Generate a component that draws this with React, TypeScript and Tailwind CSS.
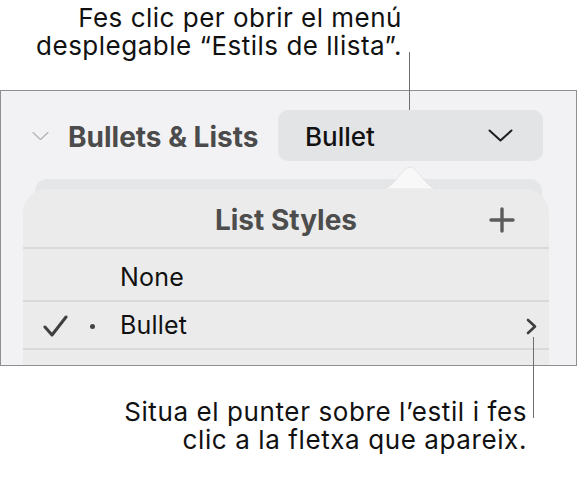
function ChevronDown({ className, stroke }: { className: string; stroke: string }) {
  return (
    <svg className={className} viewBox="0 0 25 13" fill="none">
      <path d="M1.5 1.5 L12.5 11.5 L23.5 1.5" stroke={stroke} strokeWidth="2" strokeLinecap="round" strokeLinejoin="round" />
    </svg>
  );
}

export default function App() {
  return (
    <div className="relative w-[577px] h-[497px] overflow-hidden bg-white font-[Inter,sans-serif] text-[#111]">
      {/* Top callout */}
      <div className="pt-[4px] text-right pr-[175px] text-[26px] leading-[28px] tracking-[0.5px]">
        <p>Fes clic per obrir el menú</p>
        <p>desplegable “Estils de llista”.</p>
      </div>

      {/* Inspector panel */}
      <div className="relative mt-[30px] h-[276px] border border-[#8f8f8f] bg-[#f2f2f4] overflow-hidden">
        <div className="mt-[19px] flex items-center h-[51px]">
          <ChevronDown className="ml-[31px] w-[17px] h-[10px]" stroke="#b4b4b6" />
          <span className="ml-[19px] pt-[2px] text-[28px] font-bold text-[#4b4b4b]">Bullets &amp; Lists</span>
          <button className="ml-auto mr-[33px] w-[265px] h-[51px] rounded-[10px] bg-[#e3e4e6] flex items-center pl-[27px] pr-[30px]">
            <span className="pt-[2px] text-[26px] font-medium text-[#111]">Bullet</span>
            <ChevronDown className="ml-auto w-[25px] h-[13px]" stroke="#1f1f1f" />
          </button>
        </div>

        {/* card behind the popover */}
        <div className="mt-[18px] mx-[34px] h-[30px] rounded-[12px] bg-[#e5e6e8]" />

        {/* popover */}
        <div className="-mt-[20px] ml-[22px] mr-[27px] rounded-t-[24px] bg-[#ebebeb]">
          <div className="grid grid-cols-[1fr_auto_1fr] items-center h-[58px] pt-[4px]">
            <span />
            <span className="text-[28px] font-bold text-[#4d4d4d]">List Styles</span>
            <svg className="justify-self-end mr-[34px] w-[26px] h-[26px]" viewBox="0 0 26 26" fill="none">
              <path d="M13 2 V24 M2 13 H24" stroke="#5c5c5c" strokeWidth="3.4" strokeLinecap="round" />
            </svg>
          </div>
          <div className="h-[2px] bg-[#d9d9d9]" />
          <div className="h-[51px] flex items-center pl-[97px] pt-[6px]">
            <span className="text-[25px] tracking-[0.2px] text-[#111]">None</span>
          </div>
          <div className="h-[2px] bg-[#d9d9d9]" />
          <div className="h-[46px] flex items-center pt-[2px]">
            <svg className="ml-[20px] w-[25px] h-[22px]" viewBox="0 0 25 22" fill="none">
              <path d="M2 12 L9 20 L23 2" stroke="#3f3f3f" strokeWidth="3" strokeLinecap="round" strokeLinejoin="round" />
            </svg>
            <span className="ml-[22px] w-[5px] h-[5px] rounded-full bg-[#444]" />
            <span className="ml-[25px] text-[25px] tracking-[0.2px] text-[#111]">Bullet</span>
            <svg className="ml-auto mr-[12px] w-[11px] h-[17px]" viewBox="0 0 11 17" fill="none">
              <path d="M2 2 L9 8.5 L2 15" stroke="#3f3f3f" strokeWidth="2.6" strokeLinecap="round" strokeLinejoin="round" />
            </svg>
          </div>
          <div className="h-[2px] bg-[#d9d9d9]" />
          <div className="h-[40px]" />
        </div>

        {/* popover tip */}
        <svg className="absolute left-[381px] top-[74px] w-[56px] h-[24px]" viewBox="0 0 56 24">
          <path d="M0 24 C12 24 20 2 28 2 C36 2 44 24 56 24 Z" fill="#f8f8f9" stroke="#e0e0e2" strokeWidth="0.8" />
        </svg>
      </div>

      {/* Bottom callout */}
      <div className="mt-[32px] text-right pr-[50px] text-[26px] leading-[28px] tracking-[0.6px]">
        <p>Situa el punter sobre l’estil i fes</p>
        <p>clic a la fletxa que apareix.</p>
      </div>

      {/* leader lines */}
      <div className="absolute left-[409px] top-[52px] w-px h-[58px] bg-[#6f6f6f]" />
      <div className="absolute left-[533px] top-[337px] w-px h-[81px] bg-[#6f6f6f]" />
    </div>
  );
}
